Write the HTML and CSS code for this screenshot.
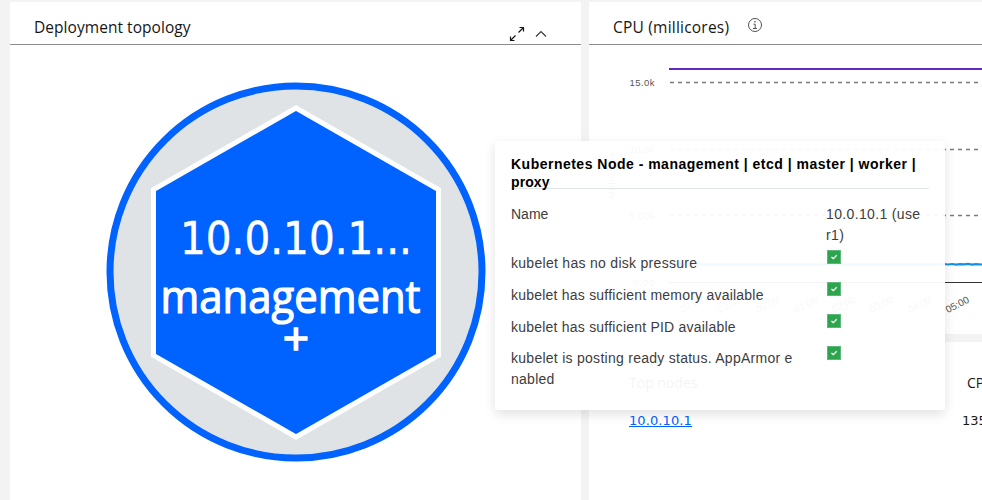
FILE: index.html
```
<!DOCTYPE html>
<html lang="en">
<head>
<meta charset="utf-8">
<title>Deployment topology</title>
<link rel="stylesheet" href="styles.css">
</head>
<body>
<main class="dashboard">
  <section class="card topology">
    <header class="card-header">
      <h2 class="card-title title-topology">Deployment topology</h2>
      <div class="card-actions">
        <svg width="16" height="16" viewBox="0 0 16 16" fill="none" stroke="#161616" stroke-width="1.2"><path d="M10.500 1.500h4v4M14.500 1.500 9.500 6.500M1.500 10.500v4h4M1.500 14.500 6.500 9.500"/></svg>
        <svg width="16" height="16" viewBox="0 0 16 16" fill="none" stroke="#393939" stroke-width="1.2"><path d="M3 10.500 8 5.500 13 10.500"/></svg>
      </div>
    </header>
    <svg class="graph" width="571" height="455" viewBox="10 45 571 455">
      <circle cx="296" cy="272" r="186" fill="#dfe3e6" stroke="#0062ff" stroke-width="7"/>
      <path d="M296 108 438.500 189.700V355.300L296 437 153.500 355.300V189.700Z" fill="#0062ff" stroke="#fff" stroke-width="5"/>
      <g class="node-label">
        <text class="address" x="180" y="254" textLength="232" lengthAdjust="spacingAndGlyphs">10.0.10.1...</text>
        <text class="role" x="160.500" y="313" textLength="260" lengthAdjust="spacingAndGlyphs">management</text>
        <text class="plus" x="296" y="355" text-anchor="middle">+</text>
      </g>
    </svg>
  </section>
  <div class="column">
    <section class="card cpu">
      <header class="card-header">
        <h2 class="card-title title-cpu">CPU (millicores)</h2>
        <svg class="info" width="16" height="16" viewBox="0 0 16 16" fill="none" stroke="#525252"><circle cx="8" cy="8" r="6.500"/><path d="M6.500 7.200H8.200V11.500M6 11.500h4"/><circle cx="8" cy="4.800" r=".4" fill="#525252"/></svg>
      </header>
      <svg class="chart" width="393" height="289" viewBox="589 45 393 289">
        <path d="M669 69H982" stroke="#6528c4" stroke-width="2"/>
        <path d="M670 82.500H982M670 149.500H982M670 215.500H982" stroke="#7b7b7b" stroke-width="1.3" stroke-dasharray="4 4"/>
        <path d="M669 282.500H982" stroke="#333"/>
        <path d="M669 264.200l8-.4 8 .5 8-.3 8 .4H940l4-.4 4 .5 4-.5 4 .7 4-.6 4 .3 4-.5 4 .7 4-.4 6 .3" fill="none" stroke="#1192e8" stroke-width="2.200"/>
        <g class="axis" text-anchor="end">
          <text x="654.500" y="86" textLength="25">15.0k</text>
          <text x="654.500" y="153" textLength="25">10.0k</text>
          <text x="654.500" y="219" textLength="25">5.00k</text>
          <text x="654.500" y="286" textLength="21">0.00</text>
        </g>
        <text class="axis" transform="translate(615 199) rotate(-90)" textLength="47">Millicores</text>
        <g class="ticks" text-anchor="end">
          <text transform="translate(704 302) rotate(-27)">22:00</text>
          <text transform="translate(742 302) rotate(-27)">23:00</text>
          <text transform="translate(780 302) rotate(-27)">00:00</text>
          <text transform="translate(818 302) rotate(-27)">01:00</text>
          <text transform="translate(856 302) rotate(-27)">02:00</text>
          <text transform="translate(894 302) rotate(-27)">03:00</text>
          <text transform="translate(932 302) rotate(-27)">04:00</text>
          <text transform="translate(970 302) rotate(-27)">05:00</text>
        </g>
      </svg>
    </section>
    <section class="card nodes">
      <div class="row"><span class="nodes-head">Top nodes</span><span class="cell-head">CPU</span></div>
      <div class="row"><a class="link">10.0.10.1</a><span class="cell-value">1350</span></div>
    </section>
  </div>
</main>
<aside class="tooltip">
  <h3 class="tip-title"><span class="tip-line">Kubernetes Node - management | etcd | master | worker |</span><br><span class="tip-proxy">proxy</span></h3>
  <dl class="facts">
    <dt>Name</dt><dd><span class="host">10.0.10.1 (use<br>r1)</span></dd>
    <dt class="disk">kubelet has no disk pressure</dt><dd><svg class="check" viewBox="0 0 14 14"><path d="M4 7l2.200 2L10.200 5"/></svg></dd>
    <dt class="memory">kubelet has sufficient memory available</dt><dd><svg class="check" viewBox="0 0 14 14"><path d="M4 7l2.200 2L10.200 5"/></svg></dd>
    <dt class="pid">kubelet has sufficient PID available</dt><dd><svg class="check" viewBox="0 0 14 14"><path d="M4 7l2.200 2L10.200 5"/></svg></dd>
    <dt class="ready">kubelet is posting ready status. AppArmor e<br>nabled</dt><dd><svg class="check check-last" viewBox="0 0 14 14"><path d="M4 7l2.200 2L10.200 5"/></svg></dd>
  </dl>
</aside>
</body>
</html>
```
FILE: styles.css
```
* { box-sizing: border-box; }
body { margin: 0; background: #f3f3f3; color: #161616; font-family: "Open Sans", sans-serif; width: 982px; height: 500px; overflow: hidden; }
.dashboard { display: grid; grid-template-columns: 571px 393px; gap: 8px; padding: 2px 0 0 10px; height: 500px; }
.column { display: flex; flex-direction: column; gap: 8px; }
.card { background: #fff; overflow: hidden; }
.card-header { display: flex; align-items: center; height: 43px; padding: 0 32px 0 24px; border-bottom: 1px solid #8c8c8c; }
.card-title { margin: 0; padding-top: 8px; font-size: 15.5px; font-weight: 400; line-height: 20px; white-space: nowrap; }
.title-topology { letter-spacing: 0.05px; }
.title-cpu { width: 117px; letter-spacing: 0.22px; }
.card-actions { display: flex; gap: 8px; margin-left: auto; padding-top: 21px; }
.graph, .chart { display: block; }
.node-label { fill: #fff; stroke: #fff; stroke-width: 1.2px; font: 44px "Open Sans", sans-serif; }
.address { font: 44px "DejaVu Sans", sans-serif; stroke-width: 0.5px; }
.role { font-size: 45px; }
.plus { font-size: 46px; stroke-width: 1.5px; }
.cpu { height: 332px; }
.info { margin: 3px 0 0 17px; }
.axis { font: 9.5px "Liberation Sans", sans-serif; fill: #565656; }
.ticks { font: 10px "Liberation Sans", sans-serif; fill: #565656; }
.nodes { flex: 1; padding: 31px 0 0 40px; font-size: 14px; }
.row { display: flex; justify-content: space-between; height: 37px; line-height: 20px; white-space: nowrap; }
.link { padding-top: 1px; color: #0062ff; font: 13px/20px "DejaVu Sans", sans-serif; letter-spacing: 0.1px; text-decoration: underline; }
.cell-head { width: 15px; }
.cell-value { width: 20px; padding-top: 1px; font: 13px/20px "DejaVu Sans", sans-serif; }
.tooltip { position: absolute; left: 495px; top: 141px; width: 450px; height: 269px; padding: 14px 16px; border-radius: 2px; background: rgba(255, 255, 255, 0.95); box-shadow: 0 4px 12px rgba(0, 0, 0, 0.12); color: #3d3d3d; font-family: "Liberation Sans", sans-serif; font-size: 14px; }
.tip-title { margin: 0; height: 34px; border-bottom: 1px solid #dfe3e6; color: #000; font-size: 14px; line-height: 18px; white-space: nowrap; }
.tip-line { letter-spacing: 0.49px; }
.tip-proxy { letter-spacing: 0.1px; }
.facts { display: grid; grid-template-columns: 315px 1fr; grid-template-rows: 49px 32px 32px 31px 42px; margin: 15px 0 0; line-height: 21px; white-space: nowrap; }
.facts dt, .facts dd { margin: 0; }
.host { letter-spacing: 0.35px; }
.disk { letter-spacing: 0.29px; }
.memory, .pid { letter-spacing: 0.22px; }
.ready { letter-spacing: 0.27px; }
.check { display: block; width: 14px; height: 14px; margin: -3px 0 0 1px; border: 1px solid #5cb878; background: #2da44e; fill: none; stroke: #fff; stroke-width: 1.5px; }
.check-last { margin-top: -2px; }
```
